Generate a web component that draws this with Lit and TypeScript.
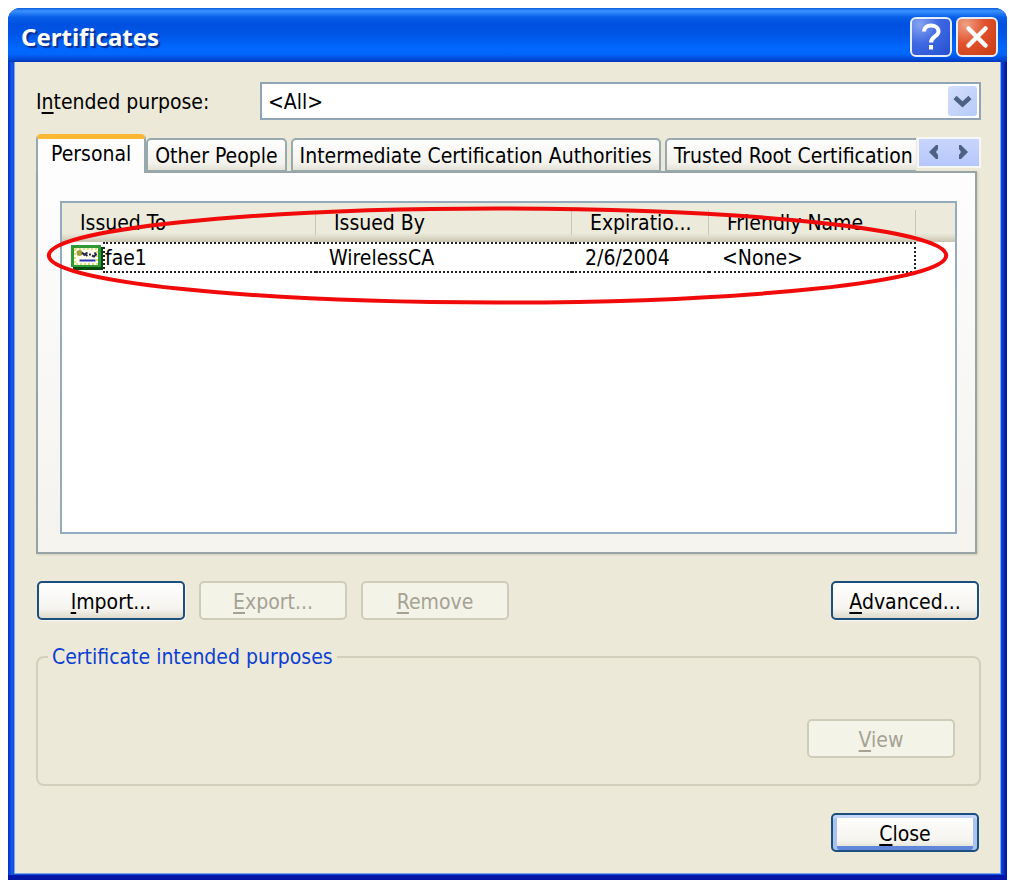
import { LitElement, html, css, svg, nothing } from "lit";
import { customElement, state } from "lit/decorators.js";

interface Certificate {
  issuedTo: string;
  issuedBy: string;
  expires: string;
  friendlyName: string;
}

const TABS = [
  "Personal",
  "Other People",
  "Intermediate Certification Authorities",
  "Trusted Root Certification Authorities",
];

const CERTIFICATES: Certificate[] = [
  { issuedTo: "fae1", issuedBy: "WirelessCA", expires: "2/6/2004", friendlyName: "<None>" },
];

const certificateIcon = html`
  <svg class="cert-icon" viewBox="0 0 32 25" aria-hidden="true">
    <rect x="2" y="2" width="30" height="23" fill="#0b4a12" />
    <rect x="0" y="0" width="30" height="22" fill="#2f9a34" />
    <rect x="3" y="3" width="24" height="17" fill="#fffff0" />
    <rect x="4" y="4" width="22" height="15" fill="none" stroke="#d8d860" stroke-width="1.500" stroke-dasharray="2 2" />
    <circle cx="8.500" cy="8" r="3" fill="#a3a03a" />
    <path d="M11 7.500l3 3M16.500 7.500l-2.500 1.500 2.500 2M18 9.500h2M21 10.500l2 1 2-2-1.500-2" stroke="#26264e" stroke-width="2" fill="none" />
    <path d="M8.500 15.500h16" stroke="#2a34b0" stroke-width="2" />
  </svg>
`;

@customElement("app-root")
export class AppRoot extends LitElement {
  @state() private activeTab = 0;

  static styles = css`
    :host {
      display: block;
      box-sizing: border-box;
      min-height: 100vh;
      padding: 8px 2px 4px 8px;
      background: #fff;
      color: #000;
      font: 21px/24px "DejaVu Sans Condensed", "DejaVu Sans", Tahoma, sans-serif;
    }
    * { box-sizing: border-box; }
    button, select { font: inherit; color: inherit; }
    u { text-underline-offset: 3px; text-decoration-thickness: 2px; }

    .window {
      padding: 0 6px 6px;
      border-radius: 12px 12px 0 0;
      background: linear-gradient(90deg, #0a36d0 0 1px, #1660e8 4px, #0d50dc 5px, #0d50dc calc(100% - 6px), #0c3fd0 calc(100% - 5px), #00109c 100%);
      box-shadow: inset 0 -5px 0 #0016a8;
    }
    .titlebar {
      display: flex;
      align-items: center;
      gap: 4px;
      height: 54px;
      margin: 0 -6px;
      padding: 3px 9px 0 13px;
      border-radius: 12px 12px 0 0;
      background: linear-gradient(#0a5cdc 0, #3a93ff 3px, #2a80f8 5px, #0860e8 9px, #0050e0 16px, #0055e6 26px, #0068ff 40px, #0066fc 46px, #0050e0 50px, #0038b8 54px);
    }
    .title {
      flex: 1;
      margin: 0;
      color: #fff;
      font: bold 24px/30px "Noto Sans", "Open Sans", sans-serif;
      text-shadow: 2px 2px 1px #0a2f93;
    }
    .caption {
      width: 42px;
      height: 40px;
      padding: 0;
      border: 2px solid #e6edfb;
      border-radius: 6px;
      background: radial-gradient(circle at 20% 15%, #86a4f0, #3f68e2 45%, #2450d0);
    }
    .caption.close { background: radial-gradient(circle at 20% 15%, #f0a086, #e0522c 45%, #c83a14); }
    .caption svg { display: block; width: 100%; height: 100%; }

    .body {
      padding: 20px 19px 21px 21px;
      border: solid #7fa4ee;
      border-width: 0 1px 1px;
      background: #ece9d8;
    }
    .purpose { display: flex; align-items: center; margin-bottom: 14px; }
    .purpose label { width: 224px; margin-top: 2px; }
    .combo { position: relative; flex: 1; }
    .combo select {
      display: block;
      width: 100%;
      height: 38px;
      padding: 2px 40px 0 6px;
      border: 2px solid #8fa5b5;
      border-radius: 0;
      background: #fff;
      appearance: none;
    }
    .combo svg {
      position: absolute;
      top: 4px;
      right: 4px;
      width: 29px;
      height: 30px;
      border-radius: 3px;
      background: linear-gradient(135deg, #d3defc, #b7cbf8);
      pointer-events: none;
    }

    .strip { position: relative; display: flex; z-index: 1; margin-bottom: -2px; }
    .tabs { display: flex; flex: 1; min-width: 0; align-items: flex-end; overflow: hidden; margin-right: 65px; }
    .tab {
      flex: none;
      height: 34px;
      margin: 0 4px 1px 0;
      padding: 2px 7px 0;
      border: 2px solid #98a9ae;
      border-radius: 5px 5px 0 0;
      background: linear-gradient(#fefefe, #f4f3ee 75%, #e4e2d6);
      white-space: nowrap;
    }
    .tab[aria-selected="true"] {
      height: 39px;
      margin: 0;
      padding: 0 13px 4px;
      border-top: 5px solid #fcb835;
      border-bottom: 0;
      background: #fdfdfe;
    }
    .scroll {
      position: absolute;
      top: 3px;
      right: 0;
      display: flex;
      border: 2px solid #f6f6fc;
      background: linear-gradient(#c8d5fc, #b6c7fa);
    }
    .scroll button { width: 30px; height: 27px; padding: 0; border: 0; background: none; }
    .scroll svg { display: block; width: 100%; height: 100%; }

    .pane {
      position: relative;
      margin-right: 4px;
      padding: 28px 18px 18px 22px;
      border: 2px solid #98a3a5;
      background: linear-gradient(#fdfdfe, #f4f3ee);
      box-shadow: 1px 1px 2px #cfccba;
    }
    .list { min-height: 333px; border: 2px solid #94abbd; background: #fff; }
    table { width: 100%; border-collapse: collapse; table-layout: fixed; }
    .c1 { width: 254px; }
    .c2 { width: 256px; }
    .c3 { width: 137px; }
    .c4 { width: 207px; }
    th {
      height: 39px;
      padding: 0;
      background: linear-gradient(#ebeadb 0 30px, #dfdcca 34px, #c8c4b0 39px);
      font-weight: normal;
      text-align: left;
      white-space: nowrap;
    }
    th span {
      display: block;
      height: 25px;
      padding: 1px 0 0 18px;
      border-right: 1px solid #c9c6b6;
      box-shadow: 1px 0 #fff;
    }
    th.filler span { border: 0; box-shadow: none; }
    td { padding: 0; }
    td .cell {
      height: 31px;
      padding: 2px 0 0 13px;
      border: dotted #222;
      border-width: 2px 0;
      white-space: nowrap;
    }
    td .named { display: flex; align-items: center; padding-left: 9px; }
    td .named .cell { flex: 1; padding-left: 0; border-left-width: 2px; }
    td .last { border-right-width: 2px; }
    .cert-icon { flex: none; width: 32px; height: 25px; }
    .ring {
      position: absolute;
      top: 33px;
      left: 9px;
      width: calc(100% - 36px);
      height: 99px;
      overflow: visible;
      pointer-events: none;
    }

    .push {
      width: 148px;
      height: 39px;
      padding: 2px 0 0;
      border: 2px solid #1d4f7e;
      border-radius: 5px;
      background: linear-gradient(#fff, #f4f3ee 75%, #dedacb);
      box-shadow: 1px 1px 1px #f8f7f0;
    }
    .push:disabled { border-color: #cfccba; background: #f4f3e8; color: #a5a294; box-shadow: none; }
    .push.default { box-shadow: inset 0 3px #c4d6fb, inset 4px 0 #aac2f2, inset -4px 0 #aac2f2, inset 0 -4px #5f86d8; }
    .actions { display: flex; gap: 14px; margin: 27px 2px 0 1px; }
    .actions .advanced { margin-left: auto; }
    fieldset {
      display: flex;
      justify-content: flex-end;
      min-height: 140px;
      margin: 25px 0 27px;
      padding: 50px 24px 26px;
      border: 2px solid #d2d0bd;
      border-radius: 8px;
    }
    legend { margin-left: -14px; padding: 0 4px; color: #0d3fd2; }
    .footer { display: flex; justify-content: flex-end; margin-right: 2px; }
  `;

  private renderRow(cert: Certificate) {
    return html`
      <tr>
        <td><div class="named">${certificateIcon}<div class="cell">${cert.issuedTo}</div></div></td>
        <td><div class="cell">${cert.issuedBy}</div></td>
        <td><div class="cell">${cert.expires}</div></td>
        <td><div class="cell last">${cert.friendlyName}</div></td>
        <td></td>
      </tr>
    `;
  }

  render() {
    return html`
      <main class="window">
        <header class="titlebar">
          <h1 class="title">Certificates</h1>
          <button class="caption" aria-label="Help">
            <svg viewBox="0 0 38 36" fill="none" stroke="#fff" stroke-width="4">
              <path d="M12 12.500c0-4 3-6 7-6s7.500 2 7.500 6c0 5-7.500 5-7.500 11" />
              <path d="M19 26v4.500" />
            </svg>
          </button>
          <button class="caption close" aria-label="Close window">
            <svg viewBox="0 0 38 36" stroke="#fff" stroke-width="4.500" stroke-linecap="round">
              <path d="M10.500 9.500l17 17m0-17l-17 17" />
            </svg>
          </button>
        </header>
        <div class="body">
          <div class="purpose">
            <label for="purpose">I<u>n</u>tended purpose:</label>
            <div class="combo">
              <select id="purpose"><option>&lt;All&gt;</option></select>
              <svg viewBox="0 0 29 30" aria-hidden="true">
                <path d="M7 11.500l7.500 7 7.500-7" fill="none" stroke="#4d6185" stroke-width="4.500" />
              </svg>
            </div>
          </div>

          <div class="strip">
            <div class="tabs" role="tablist">
              ${TABS.map(
                (label, i) => html`<button
                  class="tab"
                  role="tab"
                  aria-selected=${i === this.activeTab ? "true" : "false"}
                  @click=${() => (this.activeTab = i)}
                >${label}</button>`,
              )}
            </div>
            <div class="scroll">
              <button aria-label="Scroll tabs left">
                <svg viewBox="0 0 30 27"><path d="M19 6v4l-2 3 2 3v4h-2l-7-7 7-7z" fill="#4d6185" /></svg>
              </button>
              <button aria-label="Scroll tabs right">
                <svg viewBox="0 0 30 27"><path d="M10 6v4l2 3-2 3v4h2l7-7-7-7z" fill="#4d6185" /></svg>
              </button>
            </div>
          </div>
          <section class="pane" role="tabpanel">
            <div class="list">
              <table>
                <colgroup><col class="c1" /><col class="c2" /><col class="c3" /><col class="c4" /><col /></colgroup>
                <thead>
                  <tr>
                    <th><span>Issued To</span></th>
                    <th><span>Issued By</span></th>
                    <th><span>Expiratio...</span></th>
                    <th><span>Friendly Name</span></th>
                    <th class="filler"><span></span></th>
                  </tr>
                </thead>
                <tbody>${this.activeTab === 0 ? CERTIFICATES.map((c) => this.renderRow(c)) : nothing}</tbody>
              </table>
            </div>
            <svg class="ring" viewBox="0 0 100 100" preserveAspectRatio="none" aria-hidden="true">
              ${svg`<ellipse cx="50" cy="50" rx="49.800" ry="47.500" fill="none" stroke="#f00a0a" stroke-width="4" vector-effect="non-scaling-stroke" />`}
            </svg>
          </section>

          <div class="actions">
            <button class="push"><u>I</u>mport...</button>
            <button class="push" disabled><u>E</u>xport...</button>
            <button class="push" disabled><u>R</u>emove</button>
            <button class="push advanced"><u>A</u>dvanced...</button>
          </div>

          <fieldset>
            <legend>Certificate intended purposes</legend>
            <button class="push" disabled><u>V</u>iew</button>
          </fieldset>

          <div class="footer">
            <button class="push default"><u>C</u>lose</button>
          </div>
        </div>
      </main>
    `;
  }
}
